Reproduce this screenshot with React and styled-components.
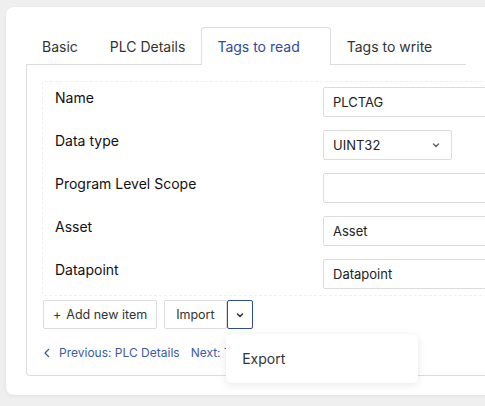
import React from 'react';
import styled, { createGlobalStyle } from 'styled-components';

const BORDER = '#dcdcdc';
const BLUE = '#2f4b9b';
const LINK = '#3d5aa3';
const TEXT = '#333333';

const Global = createGlobalStyle`
	html, body {
		margin: 0;
		background: #efefef;
		font-family: Inter, "Noto Sans", sans-serif;
		color: ${ TEXT };
	}
	#root {
		height: 406px;
		overflow: hidden;
	}
`;

const Page = styled.main`
	padding: 7px 0 0 6px;
	height: 406px;
	box-sizing: border-box;
`;

const Card = styled.section`
	width: 560px;
	height: 388px;
	box-sizing: border-box;
	background: #fff;
	border-radius: 8px;
	box-shadow: 0 1px 4px rgba(0, 0, 0, 0.06);
	padding: 20px 0 0 20px;
`;

const TabBar = styled.nav`
	display: flex;
	width: 440px;
	height: 38px;
	box-sizing: border-box;
	border-bottom: 1px solid ${ BORDER };
`;

const Tab = styled.button`
	flex-shrink: 0;
	white-space: nowrap;
	font: inherit;
	font-size: 14px;
	background: ${ p => p.active ? '#fff' : 'transparent' };
	color: ${ p => p.active ? BLUE : TEXT };
	border: 1px solid ${ p => p.active ? BORDER : 'transparent' };
	border-bottom: none;
	border-radius: 4px 4px 0 0;
	margin-bottom: -1px;
	padding: 0 ${ p => p.active ? 30 : 15 }px 0 15px;
	cursor: pointer;
`;

const Panel = styled.div`
	width: 520px;
	border: 1px solid ${ BORDER };
	border-top: none;
	border-radius: 0 0 4px 4px;
	padding: 16px 0 13px 15px;
`;

const Fields = styled.div`
	border: 1px dashed #f0f0f0;
	border-radius: 3px;
	padding: 5px 0 6px 12px;
	display: grid;
	grid-template-columns: 268px 1fr;
	row-gap: 13px;
`;

const Label = styled.label`
	font-size: 14px;
	font-weight: 400;
	color: #111;
	line-height: 20px;
	padding-top: 1px;
`;

const Input = styled.input`
	font: inherit;
	font-size: 13px;
	color: #222;
	height: 30px;
	box-sizing: border-box;
	border: 1px solid ${ BORDER };
	border-radius: 2px;
	padding: 0 9px;
	width: 200px;
	outline: none;
`;

const SelectBox = styled.div`
	display: flex;
	align-items: center;
	justify-content: space-between;
	width: 129px;
	height: 30px;
	box-sizing: border-box;
	border: 1px solid ${ BORDER };
	border-radius: 2px;
	padding: 0 10px 0 9px;
	font-size: 13px;
	color: #222;
`;

const Actions = styled.div`
	display: flex;
	gap: 7px;
	margin: 4px 0 0 1px;
`;

const Button = styled.button`
	font: inherit;
	font-size: 12.5px;
	color: #333;
	background: #fff;
	height: 29px;
	box-sizing: border-box;
	border: 1px solid ${ BORDER };
	border-radius: 2px;
	padding: 0 ${ p => p.pad || 12 }px;
	display: flex;
	align-items: center;
	gap: 5px;
`;

const SplitGroup = styled.div`
	position: relative;
	display: flex;
`;

const CaretButton = styled.button`
	width: 26px;
	height: 29px;
	box-sizing: border-box;
	background: #fff;
	border: 1.5px solid ${ BLUE };
	border-radius: 2px;
	display: flex;
	align-items: center;
	justify-content: center;
	padding: 0;
`;

const Menu = styled.div`
	position: absolute;
	left: 62px;
	top: 34px;
	width: 192px;
	height: 49px;
	background: #fff;
	border-radius: 5px;
	box-shadow: 0 2px 10px rgba(0, 0, 0, 0.09), 0 0 2px rgba(0, 0, 0, 0.04);
	display: flex;
	align-items: center;
	padding-left: 16px;
	box-sizing: border-box;
	font-size: 14px;
	color: #333;
`;

const Nav = styled.div`
	display: flex;
	align-items: center;
	gap: 11px;
	margin-top: 15px;
	font-size: 12px;
	color: ${ LINK };
	line-height: 18px;
`;

const NavLink = styled.a`
	display: flex;
	align-items: center;
	gap: 7px;
	color: inherit;
	text-decoration: none;
	white-space: nowrap;
`;

const Chevron = ({ size = 10, color = '#555', dir = 'down', stroke = 1.5 }) => (
	<svg width={ size } height={ size } viewBox="0 0 10 10" fill="none">
		<path
			d={ dir === 'down' ? 'M2.5 4l2.5 2.5L7.5 4' : 'M6.5 1.5L3 5l3.5 3.5' }
			stroke={ color }
			strokeWidth={ stroke }
			strokeLinecap="round"
			strokeLinejoin="round"
		/>
	</svg>
);

const fields = [
	{ label: 'Name', value: 'PLCTAG' },
	{ label: 'Data type', select: 'UINT32' },
	{ label: 'Program Level Scope', value: '' },
	{ label: 'Asset', value: 'Asset' },
	{ label: 'Datapoint', value: 'Datapoint' },
];

const tabs = [ 'Basic', 'PLC Details', 'Tags to read', 'Tags to write' ];

const App = () => {
	return (
		<Page>
			<Global />
			<Card>
				<TabBar>
					{ tabs.map( t => (
						<Tab key={ t } active={ t === 'Tags to read' }>{ t }</Tab>
					) ) }
				</TabBar>
				<Panel>
					<Fields>
						{ fields.map( f => (
							<React.Fragment key={ f.label }>
								<Label>{ f.label }</Label>
								{ f.select ? (
									<SelectBox>
										{ f.select }
										<Chevron size={ 10 } color="#666" />
									</SelectBox>
								) : (
									<Input defaultValue={ f.value } />
								) }
							</React.Fragment>
						) ) }
					</Fields>
					<Actions>
						<Button pad={ 9 }>
							<span>+</span>Add new item
						</Button>
						<SplitGroup>
							<Button pad={ 11 }>Import</Button>
							<CaretButton>
								<Chevron size={ 10 } color="#333" stroke={ 1.6 } />
							</CaretButton>
							<Menu>Export</Menu>
						</SplitGroup>
					</Actions>
					<Nav>
						<NavLink href="#">
							<Chevron dir="left" size={ 10 } color={ LINK } stroke={ 1.3 } />
							Previous: PLC Details
						</NavLink>
						<NavLink href="#">Next: Tags to write</NavLink>
					</Nav>
				</Panel>
			</Card>
		</Page>
	);
};

export default App;
